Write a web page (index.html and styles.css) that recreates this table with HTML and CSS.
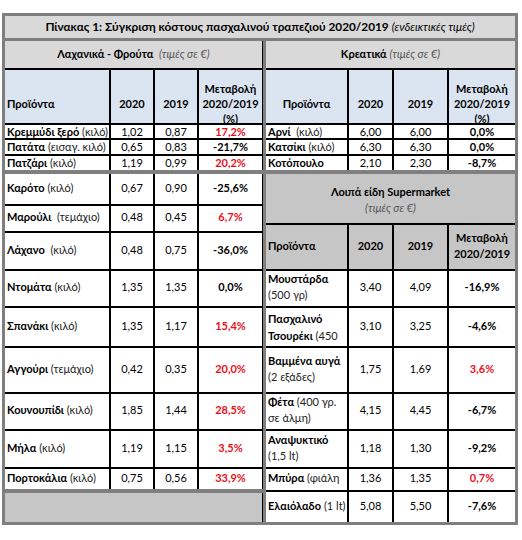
FILE: index.html
```html
<!DOCTYPE html>
<html lang="el">
<head>
<meta charset="UTF-8">
<title>Πίνακας 1 - Σύγκριση κόστους</title>
<link rel="stylesheet" href="styles.css">
</head>
<body>
<div class="sheet">
  <div class="title"><b>Πίνακας 1: Σύγκριση κόστους πασχαλινού τραπεζιού 2020/2019</b> <i>(ενδεικτικές τιμές)</i></div>
  <div class="panels">
    <div class="panel pl">
      <table class="grid">
        <colgroup><col style="width:105px"><col style="width:44px"><col style="width:44px"><col style="width:65px"></colgroup>
        <tr class="sec" style="height:28px"><td colspan="4"><b>Λαχανικά - Φρούτα</b>&nbsp; <i>(τιμές σε €)</i></td></tr>
        <tr class="head" style="height:55px"><th class="nm"><div class="hd one">Προϊόντα</div></th><th><div class="hd one">2020</div></th><th><div class="hd one">2019</div></th><th><div class="hd">Μεταβολή<br>2020/2019<br>(%)</div></th></tr>
        <tr class="sm" style="height:15px"><td class="nm"><b>Κρεμμύδι ξερό</b> <span>(κιλό)</span></td><td>1,02</td><td>0,87</td><td class="pc up">17,2%</td></tr>
        <tr class="sm" style="height:16px"><td class="nm"><b>Πατάτα</b> <span>(εισαγ. κιλό)</span></td><td>0,65</td><td>0,83</td><td class="pc">-21,7%</td></tr>
        <tr class="sm" style="height:17px"><td class="nm"><b>Πατζάρι</b> <span>(κιλό)</span></td><td>1,19</td><td>0,99</td><td class="pc up">20,2%</td></tr>
        <tr class="brk" style="height:33px"><td class="nm"><b>Καρότο</b> <span>(κιλό)</span></td><td>0,67</td><td>0,90</td><td class="pc">-25,6%</td></tr>
        <tr style="height:27px"><td class="nm"><b>Μαρούλι</b>&nbsp; <span>(τεμάχιο)</span></td><td>0,48</td><td>0,45</td><td class="pc up">6,7%</td></tr>
        <tr style="height:38px"><td class="nm"><b>Λάχανο</b>&nbsp; <span>(κιλό)</span></td><td>0,48</td><td>0,75</td><td class="pc">-36,0%</td></tr>
        <tr style="height:37px"><td class="nm"><b>Ντομάτα</b> <span>(κιλό)</span></td><td>1,35</td><td>1,35</td><td class="pc">0,0%</td></tr>
        <tr style="height:40px"><td class="nm"><b>Σπανάκι</b> <span>(κιλό)</span></td><td>1,35</td><td>1,17</td><td class="pc up">15,4%</td></tr>
        <tr style="height:46px"><td class="nm"><b>Αγγούρι</b> <span>(τεμάχιο)</span></td><td>0,42</td><td>0,35</td><td class="pc up">20,0%</td></tr>
        <tr style="height:37px"><td class="nm"><b>Κουνουπίδι</b> <span>(κιλό)</span></td><td>1,85</td><td>1,44</td><td class="pc up">28,5%</td></tr>
        <tr style="height:38px"><td class="nm"><b>Μήλα</b> <span>(κιλό)</span></td><td>1,19</td><td>1,15</td><td class="pc up">3,5%</td></tr>
        <tr style="height:23px"><td class="nm"><b>Πορτοκάλια</b> <span>(κιλό)</span></td><td>0,75</td><td>0,56</td><td class="pc up">33,9%</td></tr>
        <tr class="empty" style="height:31px"><td colspan="4"></td></tr>
      </table>
    </div>
    <div class="panel pr">
      <table class="grid">
        <colgroup><col style="width:82px"><col style="width:45px"><col style="width:55px"><col style="width:67px"></colgroup>
        <tr class="sec" style="height:28px"><td colspan="4"><b>Κρεατικά</b> <i>(τιμές σε €)</i></td></tr>
        <tr class="head" style="height:55px"><th><div class="hd one">Προϊόντα</div></th><th><div class="hd one">2020</div></th><th><div class="hd one">2019</div></th><th><div class="hd">Μεταβολή<br>2020/2019<br>(%)</div></th></tr>
        <tr class="sm" style="height:15px"><td class="nm"><b>Αρνί</b>&nbsp; <span>(κιλό)</span></td><td>6,00</td><td>6,00</td><td class="pc">0,0%</td></tr>
        <tr class="sm" style="height:16px"><td class="nm"><b>Κατσίκι</b> <span>(κιλό)</span></td><td>6,30</td><td>6,30</td><td class="pc">0,0%</td></tr>
        <tr class="sm" style="height:17px"><td class="nm"><b>Κοτόπουλο</b></td><td>2,10</td><td>2,30</td><td class="pc">-8,7%</td></tr>
        <tr class="brk band" style="height:52px"><td colspan="4"><b>Λοιπά είδη Supermarket</b><br><i>(τιμές σε €)</i></td></tr>
        <tr class="head gray" style="height:46px"><th class="nm">Προϊόντα</th><th>2020</th><th>2019</th><th>Μεταβολή<br>2020/2019</th></tr>
        <tr style="height:37px"><td class="nm two"><b>Μουστάρδα</b><br><span>(500 γρ)</span></td><td>3,40</td><td>4,09</td><td class="pc">-16,9%</td></tr>
        <tr style="height:40px"><td class="nm top"><div class="clip"><b>Πασχαλινό</b><br><b>Τσουρέκι</b> <span>(450</span><br><span>γρ)</span></div></td><td>3,10</td><td>3,25</td><td class="pc">-4,6%</td></tr>
        <tr style="height:46px"><td class="nm two"><b>Βαμμένα αυγά</b><br><span>(2 εξάδες)</span></td><td>1,75</td><td>1,69</td><td class="pc up">3,6%</td></tr>
        <tr style="height:37px"><td class="nm two"><b>Φέτα</b> <span>(400 γρ.<br>σε άλμη)</span></td><td>4,15</td><td>4,45</td><td class="pc">-6,7%</td></tr>
        <tr style="height:38px"><td class="nm two"><b>Αναψυκτικό</b><br><span>(1,5 lt)</span></td><td>1,18</td><td>1,30</td><td class="pc">-9,2%</td></tr>
        <tr style="height:23px"><td class="nm"><b>Μπύρα</b> <span>(φιάλη</span></td><td>1,36</td><td>1,35</td><td class="pc up">0,7%</td></tr>
        <tr style="height:31px"><td class="nm"><b>Ελαιόλαδο</b> <span>(1 lt)</span></td><td>5,08</td><td>5,50</td><td class="pc">-7,6%</td></tr>
      </table>
    </div>
  </div>
</div>
</body>
</html>
```

FILE: styles.css
```css
body {
margin: 0;
padding: 13px 0 0 2px;
font-family: Lato, "Noto Sans", sans-serif;
font-size: 11px;
color: #000;
background-color: #fff;
}
.sheet {
width: 510px;
border: 3px solid #7f7f7f;
}
.title {
height: 22px;
line-height: 22px;
text-align: center;
font-size: 11.8px;
background-color: #d9d9d9;
border-bottom: 3px solid #7f7f7f;
}
.title i {
font-size: 11.3px;
}
.panels {
display: flex;
}
.pl {
width: 258px;
}
.pr {
width: 249px;
border-left: 3px solid #7f7f7f;
}
.grid {
width: 100%;
border-collapse: collapse;
table-layout: fixed;
}
.grid td, .grid th {
border: 2px solid #000;
padding: 0 2px 3px;
text-align: center;
vertical-align: middle;
line-height: 12px;
font-weight: normal;
overflow: hidden;
}
.grid .sm td {
padding-bottom: 0;
}
.grid tr > :first-child {
border-left: 0;
}
.pr .grid tr > :last-child {
border-right: 0;
}
.grid tr:first-child > * {
border-top: 0;
}
.grid tr:last-child > * {
border-bottom: 0;
}
.grid .nm {
text-align: left;
padding-left: 2px;
white-space: nowrap;
}
.grid .two {
line-height: 16px;
}
.grid .nm span {
color: #222;
}
.grid .sec td {
background-color: #d9d9d9;
padding-bottom: 1px;
}
.sec i, .band i {
color: #555;
}
.grid .head th {
background-color: #dbe5f1;
font-weight: bold;
vertical-align: bottom;
line-height: 15px;
padding-bottom: 0;
overflow: visible;
}
.hd {
margin-bottom: -3px;
}
.hd.one {
padding-bottom: 15px;
}
.grid .head.gray th {
background-color: #c6c6c6;
vertical-align: middle;
line-height: 16px;
padding-bottom: 2px;
}
.grid .brk > * {
border-top: 4px solid #7f7f7f;
}
.grid .band td {
background-color: #c6c6c6;
line-height: 16px;
padding-top: 6px;
}
.grid .empty td {
background-color: #c6c6c6;
border-top: 4px solid #7f7f7f;
}
.grid .pc {
font-weight: bold;
}
.up {
color: #e8101a;
}
.grid .top {
vertical-align: top;
padding: 2px 2px 0;
line-height: 17px;
}
.clip {
height: 36px;
overflow: hidden;
}
```
